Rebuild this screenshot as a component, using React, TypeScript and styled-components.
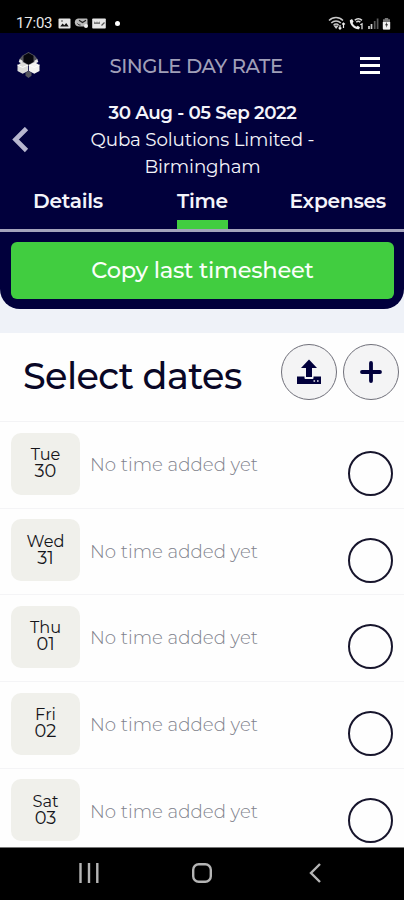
import React from 'react';
import styled, { createGlobalStyle } from 'styled-components';

const navy = '#01003c';
const green = '#41cd40';

const GlobalStyle = createGlobalStyle`
  *, *::before, *::after { box-sizing: border-box; }
  body { margin: 0; background: #fff; font-family: Montserrat, Inter, sans-serif; }
  button { font: inherit; border: 0; padding: 0; background: none; color: inherit; }
  svg { display: block; flex: none; }
`;

const Screen = styled.div`
  width: 404px;
  height: 900px;
  display: flex;
  flex-direction: column;
  overflow: hidden;
  background: #fefefe;
`;

const StatusBar = styled.div`
  height: 33px;
  flex: none;
  display: flex;
  align-items: center;
  padding: 13px 13px 0 16px;
  background: #000;
  color: #e8e8e8;
  font: 400 15px/20px Roboto, sans-serif;
`;

const Clock = styled.span`
  width: 42px;
  letter-spacing: -0.2px;
`;

const StatusGroup = styled.div<{ $end?: boolean }>`
  display: flex;
  align-items: center;
  gap: ${(p) => (p.$end ? '3.5px' : '3px')};
  margin-left: ${(p) => (p.$end ? 'auto' : '0')};
`;

const Dot = styled.span`
  width: 5px;
  height: 5px;
  margin-left: 6px;
  border-radius: 50%;
  background: #fff;
`;

const Header = styled.header`
  flex: none;
  background: ${navy};
  color: #f4f4fa;
`;

const TitleBar = styled.div`
  height: 64px;
  display: grid;
  grid-template-columns: 60px 1fr 60px;
  align-items: center;
`;

const LogoSlot = styled.div`
  padding-left: 16px;
`;

const Title = styled.h1`
  margin: 0;
  padding: 2px 12px 0 0;
  color: #a09fb8;
  font-size: 19.7px;
  font-weight: 500;
  line-height: 24px;
  letter-spacing: -0.45px;
  text-align: center;
  white-space: nowrap;
`;

const MenuButton = styled.button`
  width: 20px;
  margin-left: 16px;
  display: grid;
  gap: 4px;
`;

const MenuLine = styled.span`
  height: 3px;
  background: #fff;
`;

const Period = styled.section`
  height: 86px;
  display: grid;
  grid-template-columns: 40px 1fr 40px;
  align-items: center;
`;

const BackButton = styled.button`
  padding-left: 11px;
`;

const PeriodText = styled.div`
  padding-left: 1px;
  font-size: 18.3px;
  line-height: 27px;
  letter-spacing: -0.15px;
  text-align: center;
`;

const PeriodDates = styled.div`
  margin-top: -1px;
  font-size: 18.3px;
  font-weight: 600;
  letter-spacing: -0.43px;
`;

const Tabs = styled.nav`
  height: 49px;
  display: grid;
  grid-template-columns: 1fr auto 1fr;
  padding: 0 18px 0 33px;
  border-bottom: 3px solid #a4a3bc;
`;

const Tab = styled.button<{ $active?: boolean; $side?: 'left' | 'right' }>`
  height: 46px;
  padding-top: 6px;
  justify-self: ${(p) => (p.$side === 'left' ? 'start' : p.$side === 'right' ? 'end' : 'center')};
  margin-right: ${(p) => (p.$side ? '0' : '14px')};
  border-bottom: 9px solid ${(p) => (p.$active ? green : 'transparent')};
  font-size: 20.2px;
  font-weight: 600;
  line-height: 24px;
  letter-spacing: -0.25px;
  display: flex;
`;

const ActionArea = styled.section`
  flex: none;
  height: 101px;
  background: #eff2f8;
`;

const ActionPanel = styled.div`
  height: 77px;
  padding: 10px 10px 10px 11px;
  border-radius: 0 0 20px 20px;
  background: ${navy};
`;

const CopyButton = styled.button`
  width: 100%;
  height: 57px;
  padding-bottom: 2px;
  border-radius: 6px;
  background: ${green};
  color: #fafffa;
  font-size: 22.6px;
  font-weight: 500;
  letter-spacing: -0.27px;
`;

const DatesHeader = styled.div`
  flex: none;
  height: 89px;
  display: flex;
  align-items: center;
  padding: 0 5px 9px 23px;
  border-bottom: 1px solid #f3f3f5;
`;

const Heading = styled.h2`
  margin: 6px auto 0 0;
  color: #090726;
  font-size: 36.6px;
  font-weight: 500;
  line-height: 44px;
  letter-spacing: -0.6px;
`;

const RoundButton = styled.button`
  width: 56px;
  height: 56px;
  margin: -2px 0 0 6px;
  display: grid;
  place-items: center;
  border: 1px solid #70707a;
  border-radius: 50%;
  background: #f4f4f5;
  color: ${navy};
`;

const DayList = styled.ul`
  flex: 1;
  min-height: 0;
  margin: 0;
  padding: 0;
  list-style: none;
  overflow: hidden;
`;

const DayRow = styled.li`
  height: 86.7px;
  display: flex;
  align-items: flex-start;
  padding: 10.5px 11px 0 11px;
  border-bottom: 1px solid #f4f4f6;
`;

const DayBadge = styled.div`
  width: 69px;
  height: 62px;
  padding-top: 13.5px;
  border-radius: 10px;
  background: #f0f0eb;
  color: #15151a;
  font-size: 16.2px;
  line-height: 16px;
  text-align: center;
`;

const DayNumber = styled.div`
  font-size: 17.8px;
  line-height: 17px;
`;

const DayNote = styled.span`
  margin: 21.5px auto 0 10px;
  color: #7f828c;
  font-size: 18.2px;
  font-weight: 300;
  line-height: 22px;
`;

const SelectCircle = styled.button`
  width: 45px;
  height: 45px;
  margin-top: 18.5px;
  border: 2px solid #17152c;
  border-radius: 50%;
`;

const SystemNav = styled.footer`
  flex: none;
  height: 53px;
  display: flex;
  align-items: center;
  padding: 0 83px 2px 79px;
  justify-content: space-between;
  background: #000;
  border-top: 1px solid #777;
`;

const HomeSlot = styled.div`
  margin-right: 4px;
`;

const PictureIcon = () => (
  <svg width="13" height="11" viewBox="0 0 13 11">
    <rect x=".5" y=".5" width="12" height="10" rx="1" fill="#e4e4e4" />
    <path d="M2.2 8.6 4.6 5.5l1.7 1.7L8.2 5l2.5 3.6z" fill="#111" />
    <circle cx="4" cy="3" r=".8" fill="#333" />
  </svg>
);

const ChatIcon = () => (
  <svg width="15" height="12" viewBox="0 0 15 12">
    <path d="M4 1.5h8.5a1 1 0 0 1 1 1v6a1 1 0 0 1-1 1H5.5C2.3 9.5.8 7.6.8 5.4S2 1.8 4 1.5z" fill="#b9b9b9" />
    <path d="m5 3.2 3.5 2.3L12 3.2" fill="none" stroke="#222" strokeWidth="1.1" />
    <path d="M3.5 6.5c.5 1 1.6 1.5 3 1.5" fill="none" stroke="#222" />
    <circle cx="12" cy="9" r="2" fill="#eee" />
  </svg>
);

const CardIcon = () => (
  <svg width="14" height="11" viewBox="0 0 14 11">
    <rect x=".2" y=".5" width="13.6" height="10" rx=".8" fill="#e6e6e6" />
    <path d="M2 5.2h6M9.5 7.5l3-3" stroke="#555" strokeWidth="1.2" />
    <path d="M2.5 3.7v1M5 3.7v1M7.5 3.7v1" stroke="#777" />
  </svg>
);

const WifiIcon = () => (
  <svg width="18" height="14" viewBox="0 0 18 14" fill="none" stroke="#c9c9c9" strokeWidth="1.5">
    <path d="M1 4.5c4-4 10-4 14 0M3.3 7c2.7-2.8 6.8-2.8 9.5 0M5.6 9.2c1.5-1.5 3.5-1.5 5 0" />
    <path d="m7 10.3 1.1 1.4 1.1-1.4z" fill="#c9c9c9" />
    <path d="M12 9v4M10.6 11.7l1.4 1.5 1.4-1.5M15.5 12V7M14.1 8.4 15.5 7l1.4 1.4" stroke="#eee" strokeWidth="1.2" />
  </svg>
);

const CallIcon = () => (
  <svg width="15" height="13" viewBox="0 0 15 13">
    <path d="M.8 3.2 3 2l1.6 2.6-1 1.5c.9 1.8 2 2.9 3.8 3.7l1.4-1.1 2.2 1.5-1 2C5.8 12.7.7 8.4.8 3.2z" fill="#ececec" />
    <path d="M5.8 3.3c2-2 5-2 7.1 0M7.3 5.2c1.2-1.2 2.7-1.2 4 0" fill="none" stroke="#ddd" strokeWidth="1.6" />
    <path d="m11.3 7.8 1.7-.9v5.3" fill="none" stroke="#ddd" strokeWidth="1.3" />
  </svg>
);

const SignalIcon = () => (
  <svg width="11" height="12" viewBox="0 0 11 12">
    <path d="M1 9v3M3.5 7v5" stroke="#d0d0d0" strokeWidth="1.7" />
    <path d="M6.7 4v8M9.6 1.5V12" stroke="#5a5a5a" strokeWidth="1.7" />
  </svg>
);

const BatteryIcon = () => (
  <svg width="9" height="13" viewBox="0 0 9 13">
    <path d="M2.8 1h3.4v1.2H8v10.3H1V2.2h1.8z" fill="#777" />
    <path d="M.8 5h7.4v6.5a1 1 0 0 1-1 1H1.8a1 1 0 0 1-1-1z" fill="#f1f1f1" />
    <path d="M5 4.7 3.1 8.3h1.3L4 10.7l2-3.4H4.7z" fill="#222" />
  </svg>
);

const Logo = () => (
  <svg width="25" height="28" viewBox="0 0 25 28">
    <path d="m12.5 1 6 3.4 3 3.6-3 4-6 3-6-3-3-4 3-3.6z" fill="#56565e" />
    <path d="m12.5 2 5 2.7v6.1l-5 3-5-3V4.7z" fill="#07070d" />
    <path d="m3.7 8 3.2 2-1.2 2.5-3-1.5zM21.3 8l-3.2 2 1.2 2.5 3-1.5z" fill="#e5e5e5" />
    <path d="m6.7 11 5.4 3v6l-5.4 2.8L1.500 20v-6z" fill="#dcdcda" />
    <path d="m18.300 11 5.200 3v6l-5.200 2.800-5.400-2.800v-6z" fill="#f3f3f1" />
    <path d="m1.500 14 5.200 2.500L12 14M12.900 14l5.400 2.500 5.200-2.500" fill="none" stroke="#fff" strokeWidth="1" />
    <path d="m12.500 20 3 1.700v3l-3 2.300-3-2.300v-3z" fill="#55565e" />
  </svg>
);

const BackIcon = () => (
  <svg width="18" height="26" viewBox="0 0 18 26" fill="none" stroke="#b7b6cf" strokeWidth="4.6">
    <path d="M15.500 1.500 4.500 12.500l11 11" />
  </svg>
);

const UploadIcon = () => (
  <svg width="26" height="26" viewBox="0 0 26 26" fill="currentColor">
    <path d="M13 .5 21 9h-5v9h-6V9H5z" />
    <path d="M1 17.5h7.5V19a1 1 0 0 0 1 1h7a1 1 0 0 0 1-1v-1.5H25V25H1z" />
    <path d="M17.5 22h1.6M21 22h1.6" stroke="#e9e9ef" strokeWidth="1.4" />
  </svg>
);

const PlusIcon = () => (
  <svg width="22" height="22" viewBox="0 0 22 22" fill="none" stroke="currentColor" strokeWidth="3.8" strokeLinecap="round">
    <path d="M11 2v18M2 11h18" />
  </svg>
);

const RecentsIcon = () => (
  <svg width="20" height="20" viewBox="0 0 20 20" stroke="#b5b5b5" strokeWidth="2.4">
    <path d="M1.5 0v20M10 0v20M18.3 0v20" />
  </svg>
);

const HomeIcon = () => (
  <svg width="20" height="20" viewBox="0 0 20 20" fill="none" stroke="#b5b5b5" strokeWidth="2.4">
    <rect x="1.2" y="1.2" width="17.6" height="17.6" rx="5.5" />
  </svg>
);

const NavBackIcon = () => (
  <svg width="12" height="20" viewBox="0 0 12 20" fill="none" stroke="#b5b5b5" strokeWidth="2.4">
    <path d="M11 1 2 10l9 9" />
  </svg>
);

const days = [
  ['Tue', '30'],
  ['Wed', '31'],
  ['Thu', '01'],
  ['Fri', '02'],
  ['Sat', '03'],
];

export default function App() {
  return (
    <Screen>
      <GlobalStyle />
      <StatusBar>
        <Clock>17:03</Clock>
        <StatusGroup>
          <PictureIcon />
          <ChatIcon />
          <CardIcon />
          <Dot />
        </StatusGroup>
        <StatusGroup $end>
          <WifiIcon />
          <CallIcon />
          <SignalIcon />
          <BatteryIcon />
        </StatusGroup>
      </StatusBar>
      <Header>
        <TitleBar>
          <LogoSlot><Logo /></LogoSlot>
          <Title>SINGLE DAY RATE</Title>
          <MenuButton aria-label="Menu">
            <MenuLine />
            <MenuLine />
            <MenuLine />
          </MenuButton>
        </TitleBar>
        <Period>
          <BackButton aria-label="Previous period"><BackIcon /></BackButton>
          <PeriodText>
            <PeriodDates>30 Aug - 05 Sep 2022</PeriodDates>
            <div>Quba Solutions Limited -</div>
            <div>Birmingham</div>
          </PeriodText>
        </Period>
        <Tabs>
          <Tab $side="left">Details</Tab>
          <Tab $active>Time</Tab>
          <Tab $side="right">Expenses</Tab>
        </Tabs>
      </Header>
      <ActionArea>
        <ActionPanel>
          <CopyButton>Copy last timesheet</CopyButton>
        </ActionPanel>
      </ActionArea>
      <DatesHeader>
        <Heading>Select dates</Heading>
        <RoundButton aria-label="Upload"><UploadIcon /></RoundButton>
        <RoundButton aria-label="Add"><PlusIcon /></RoundButton>
      </DatesHeader>
      <DayList>
        {days.map(([name, date]) => (
          <DayRow key={date}>
            <DayBadge>
              {name}
              <DayNumber>{date}</DayNumber>
            </DayBadge>
            <DayNote>No time added yet</DayNote>
            <SelectCircle aria-label={`Select ${name} ${date}`} />
          </DayRow>
        ))}
      </DayList>
      <SystemNav>
        <RecentsIcon />
        <HomeSlot><HomeIcon /></HomeSlot>
        <NavBackIcon />
      </SystemNav>
    </Screen>
  );
}
